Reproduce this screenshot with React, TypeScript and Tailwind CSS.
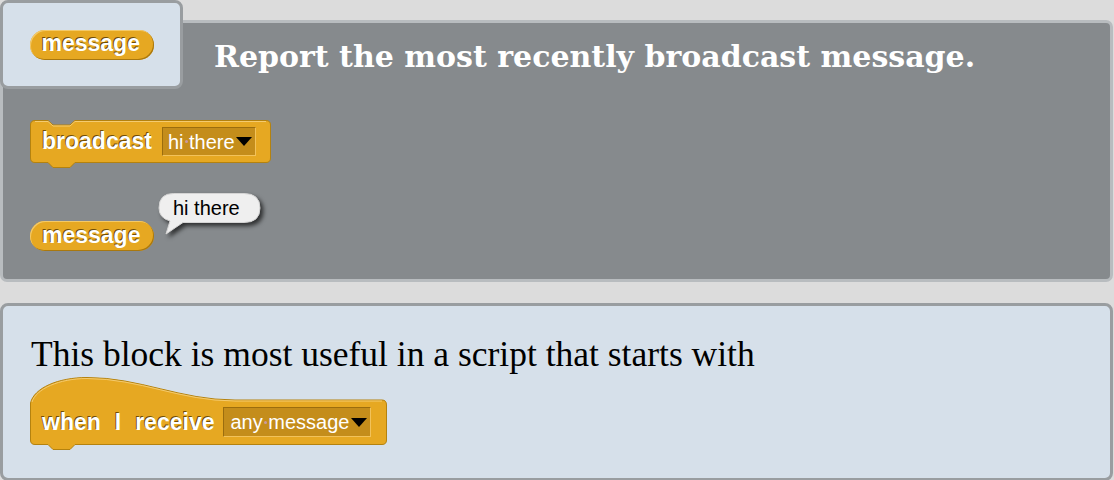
import React from "react";

const label = "font-['Liberation_Sans',Arial,sans-serif] font-bold text-[23px] leading-none text-white [text-shadow:-1px_-1px_0_rgba(80,52,0,0.8)]";

/** the little pink dot Snap draws in place of a space inside a slot */
function SpaceDot() {
  return (
    <span className="inline-flex w-[5.5px] items-center justify-center self-center">
      <span className="h-[3px] w-[3px] rounded-full bg-[#c99aa2]" />
    </span>
  );
}

function Arrow() {
  return (
    <svg width="16" height="9" viewBox="0 0 16 9" className="shrink-0">
      <polygon points="0,0 16,0 8,9" fill="#000" />
    </svg>
  );
}

function Slot({ words, w, h, pl }: { words: [string, string]; w: number; h: number; pl: number }) {
  return (
    <div
      className="flex shrink-0 items-center justify-between border border-t-[#9b6d0e] border-l-[#9b6d0e] border-b-[#f2c25a] border-r-[#f2c25a] bg-[#c48d1b] pr-[3px]"
      style={{ width: w, height: h, paddingLeft: pl }}
    >
      <span className="flex font-['Liberation_Sans',Arial,sans-serif] text-[20px] leading-none text-white">
        {words[0]}
        <SpaceDot />
        {words[1]}
      </span>
      <Arrow />
    </div>
  );
}

function Reporter({ text }: { text: string }) {
  return (
    <div className="flex h-[30px] w-[124px] items-center rounded-full bg-[#e6a822] pb-[2px] pl-[12px] shadow-[inset_-1px_-1px_0_#a9780f,inset_1px_1px_0_#f3c968]">
      <span className={label}>{text}</span>
    </div>
  );
}

function BroadcastBlock() {
  return (
    <div className="relative h-[43px] w-[241px]">
      <svg width="241" height="49" viewBox="0 0 241 49" className="absolute left-0 top-0 overflow-visible">
        <path
          d="M0.5,5 Q0.5,0.5 5,0.5 L18,0.5 L23,5 L40,5 L45,0.5 L236,0.5 Q240.5,0.5 240.5,5 L240.5,38 Q240.5,42.5 236,42.5 L45,42.5 L40,47.5 L23,47.5 L18,42.5 L5,42.5 Q0.5,42.5 0.5,38 Z"
          fill="#e6a822"
          stroke="#b4820f"
          strokeWidth="1"
        />
        <path d="M5,1.5 L18,1.5 L23,6 L40,6 L45,1.5 L236,1.5" fill="none" stroke="#f4cb70" strokeWidth="1" />
      </svg>
      <div className="relative flex h-full items-center gap-[10px] pl-[12px]">
        <span className={label}>broadcast</span>
        <Slot words={["hi", "there"]} w={94} h={29} pl={5} />
      </div>
    </div>
  );
}

function HatBlock() {
  return (
    <div className="relative h-[68px] w-[357px]">
      <svg width="357" height="74" viewBox="0 0 357 74" className="absolute left-0 top-0 overflow-visible">
        <path
          d="M0.5,26 C4,11 28,0.5 57,0.5 C110,0.5 150,23 205,23 L352,23 Q356.5,23 356.5,28 L356.5,63 Q356.5,67.5 352,67.5 L45,67.5 L40,72.5 L23,72.5 L18,67.5 L5,67.5 Q0.5,67.5 0.5,63 Z"
          fill="#e6a822"
          stroke="#b4820f"
          strokeWidth="1"
        />
        <path d="M2,25 C6,12 29,1.5 57,1.5 C110,1.5 150,24 205,24 L352,24" fill="none" stroke="#f4cb70" strokeWidth="1" />
      </svg>
      <div className="relative flex h-full items-center pl-[12px] pt-[23px]">
        <div className="flex items-center gap-[14px]">
          <span className={label}>when</span>
          <span className={label}>I</span>
          <span className={label}>receive</span>
        </div>
        <div className="ml-[9px]">
          <Slot words={["any", "message"]} w={148} h={30} pl={6} />
        </div>
      </div>
    </div>
  );
}

function Bubble() {
  return (
    <div className="relative h-[44px] w-[108px]">
      <svg width="108" height="44" viewBox="0 0 108 44" className="absolute left-0 top-0 drop-shadow-[3px_3px_2px_rgba(0,0,0,0.65)]">
        <path
          d="M16.5,0.5 L87,0.5 Q103,0.5 103,15 Q103,29.5 87,29.5 L26,29.5 L9,41 L13,28 Q2,25 2,15 Q2,0.5 16.5,0.5 Z"
          fill="#efefef"
          stroke="#d4d4d4"
          strokeWidth="1"
        />
      </svg>
      <div className="relative flex h-[30px] items-center pl-[16px] font-['Liberation_Sans',Arial,sans-serif] text-[20px] leading-none text-black">
        hi there
      </div>
    </div>
  );
}

export default function App() {
  return (
    <div className="min-h-[480px] bg-[#dcdcdc] pr-[1px]">
      {/* help panel */}
      <div className="mt-[20px] inline-block w-full rounded-[7px] border-[3px] border-[#b8bcbf] bg-[#868a8d] pb-[28px]">
        <div className="flex h-[66px] items-start">
          <div className="-ml-[3px] -mt-[23px] flex h-[89px] w-[183px] shrink-0 items-center justify-center rounded-[8px] border-[3px] border-[#999da0] bg-[#d6e0ea]">
            <Reporter text="message" />
          </div>
          <h1 className="ml-[31px] mt-[19px] whitespace-nowrap font-['DejaVu_Serif',Georgia,serif] text-[30px] font-bold leading-none text-white">
            Report the most recently broadcast message.
          </h1>
        </div>
        <div className="ml-[27px] mt-[31px]">
          <BroadcastBlock />
        </div>
        <div className="ml-[27px] mt-[30px] flex items-start gap-[3px]">
          <div className="mt-[28px]">
            <Reporter text="message" />
          </div>
          <Bubble />
        </div>
      </div>

      {/* usage note */}
      <div className="mt-[21px] h-[178px] rounded-[8px] border-[3px] border-[#999da0] bg-[#d6e0ea] pl-[27px] pt-[31px]">
        <p className="pl-[1px] font-['Liberation_Serif','Times_New_Roman',serif] text-[35.5px] leading-none text-black">
          This block is most useful in a script that starts with
        </p>
        <div className="mt-[4px]">
          <HatBlock />
        </div>
      </div>
    </div>
  );
}
